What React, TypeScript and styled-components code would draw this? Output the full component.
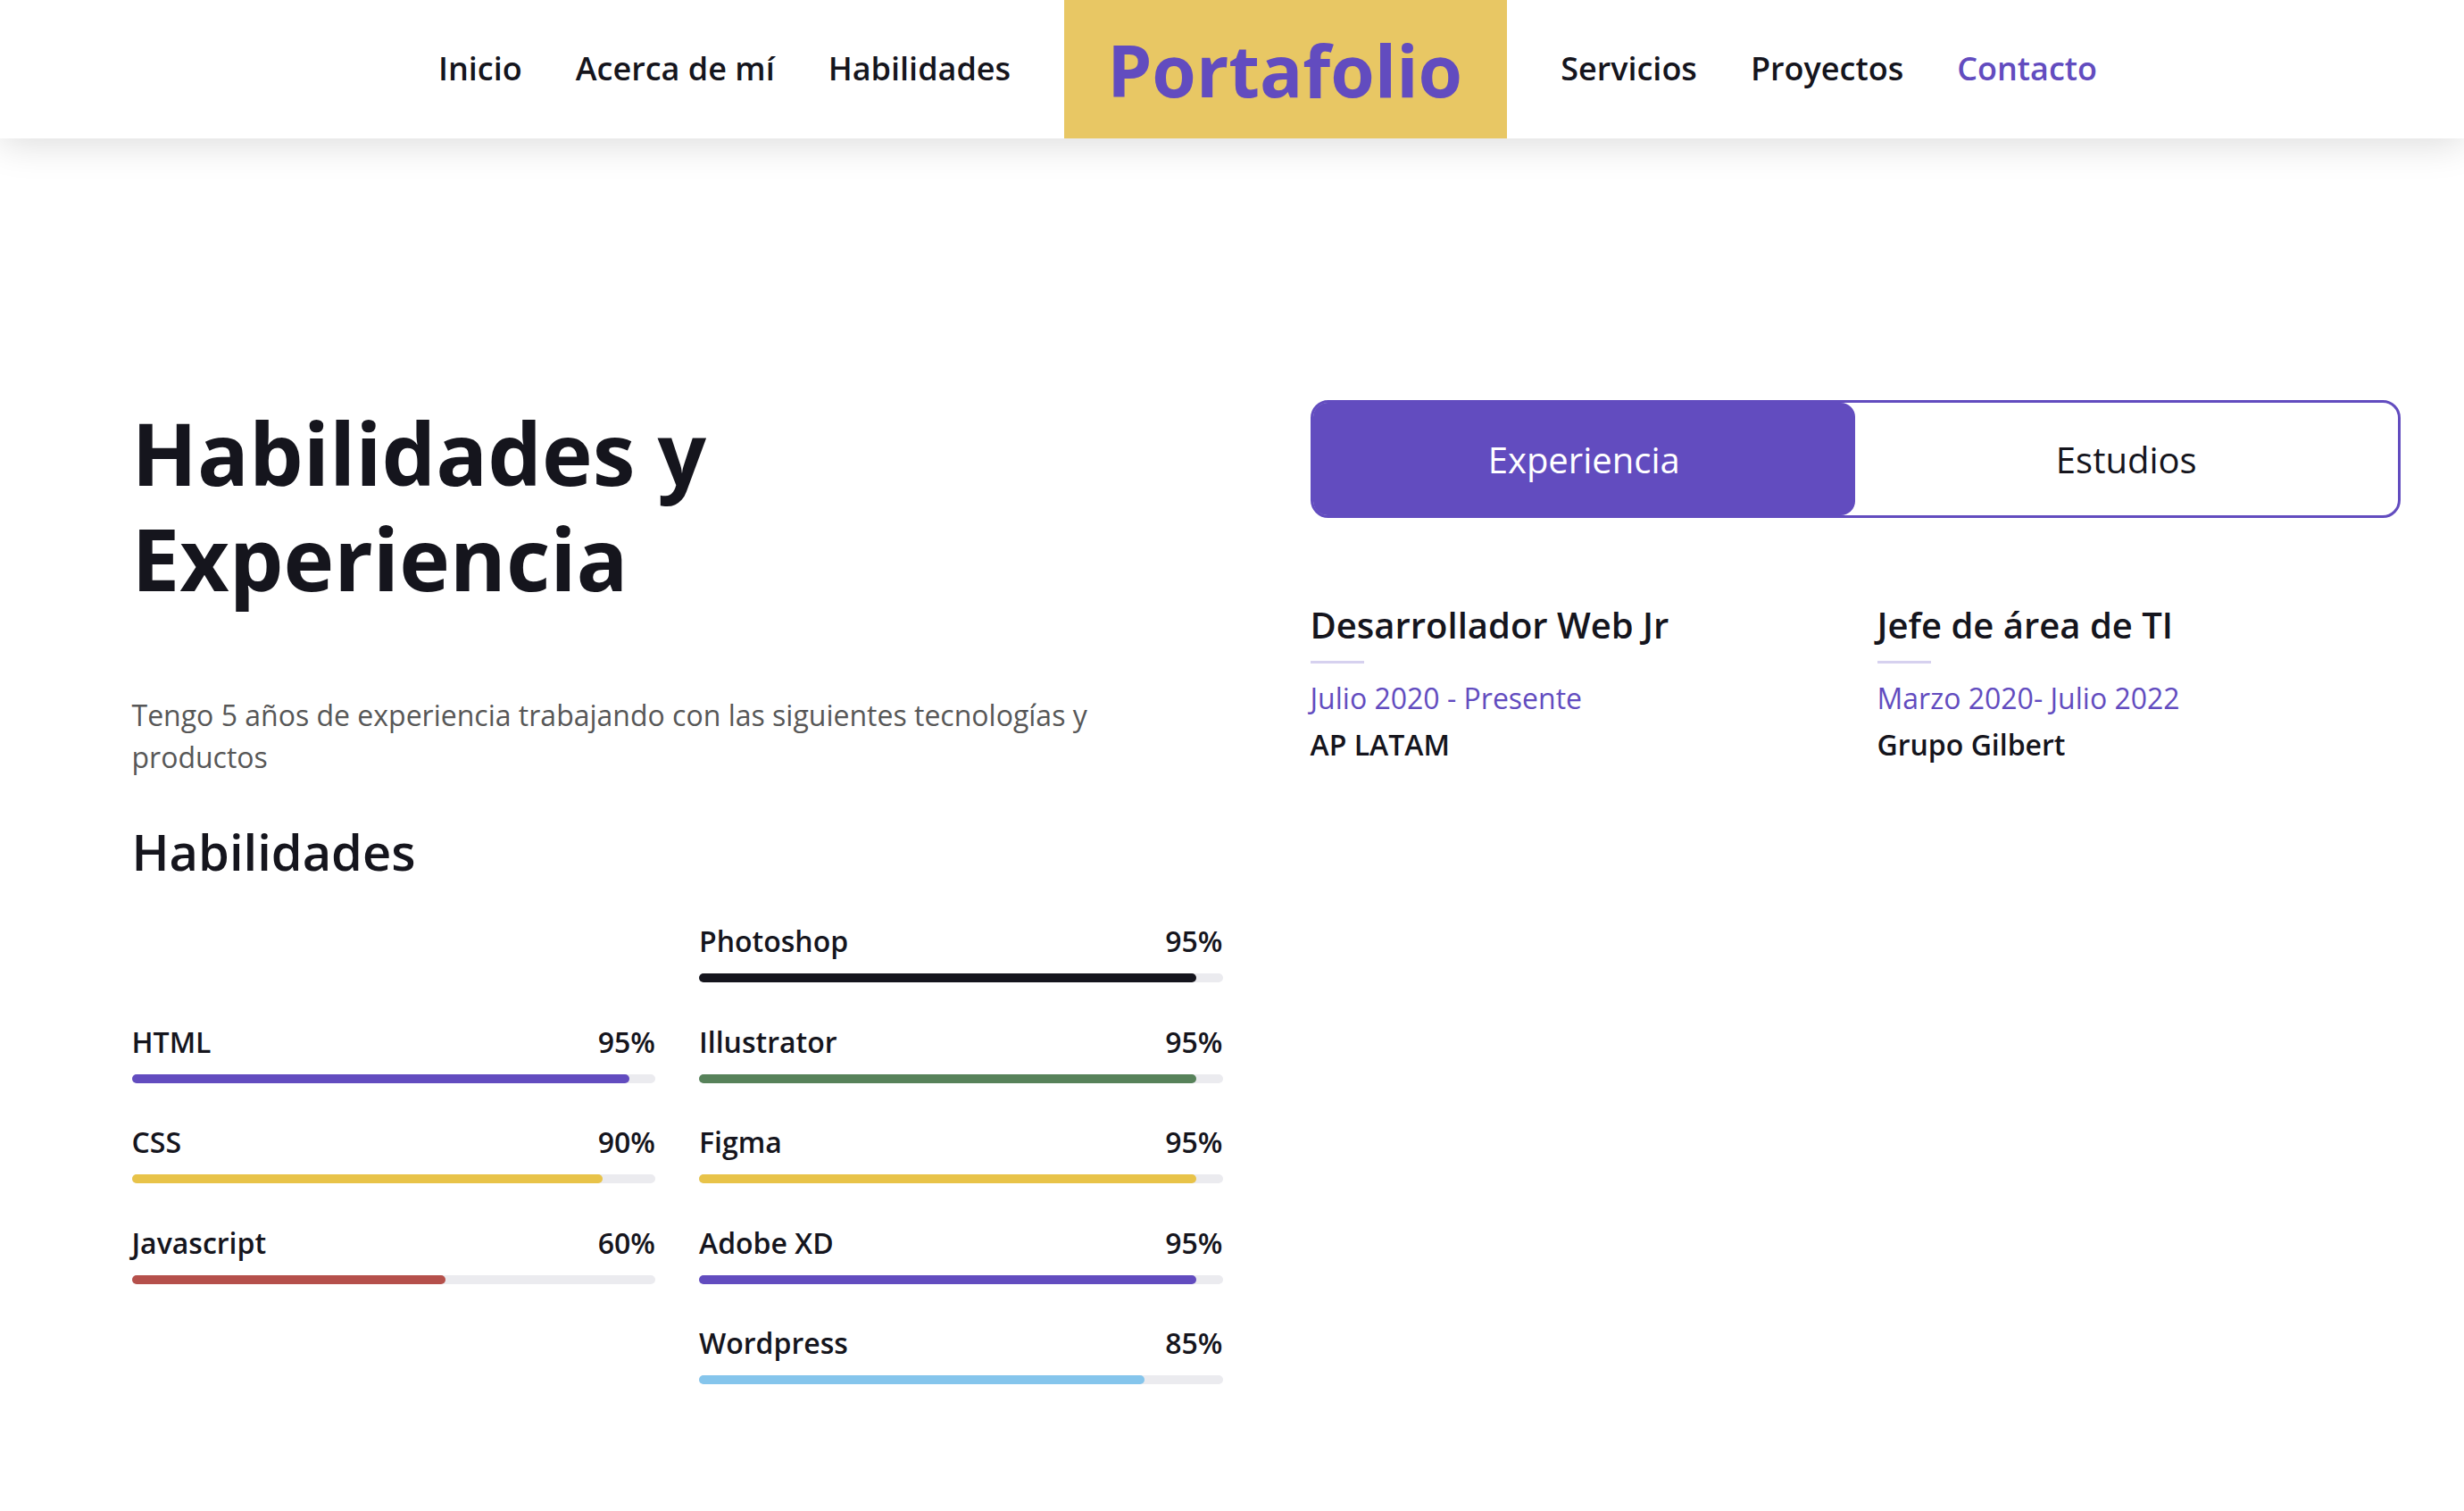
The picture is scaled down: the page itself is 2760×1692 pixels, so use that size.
import styled, { createGlobalStyle } from 'styled-components';

const purple = '#624cbf';
const ink = '#15151d';

const GlobalStyle = createGlobalStyle`
  * {
    box-sizing: border-box;
  }
  body {
    margin: 0;
    background: #fff;
    color: ${ink};
    font-family: 'Open Sans', 'Noto Sans', sans-serif;
  }
`;

const navItems = ['Inicio', 'Acerca de mí', 'Habilidades'];
const navItemsRight = ['Servicios', 'Proyectos', 'Contacto'];

const skillsLeft = [
  { name: 'HTML', value: 95, color: purple },
  { name: 'CSS', value: 90, color: '#e8c349' },
  { name: 'Javascript', value: 60, color: '#b5504b' },
];

const skillsRight = [
  { name: 'Photoshop', value: 95, color: ink },
  { name: 'Illustrator', value: 95, color: '#57825a' },
  { name: 'Figma', value: 95, color: '#e8c349' },
  { name: 'Adobe XD', value: 95, color: purple },
  { name: 'Wordpress', value: 85, color: '#85c5ec' },
];

const jobs = [
  { title: 'Desarrollador Web Jr', date: 'Julio 2020 - Presente', company: 'AP LATAM' },
  { title: 'Jefe de área de TI', date: 'Marzo 2020- Julio 2022', company: 'Grupo Gilbert' },
];

type Skill = { name: string; value: number; color: string };

function SkillBar({ skill }: { skill: Skill }) {
  return (
    <SkillItem>
      <SkillLabel>
        <span>{skill.name}</span>
        <span>{skill.value}%</span>
      </SkillLabel>
      <Track>
        <Fill $color={skill.color} style={{ width: `${skill.value}%` }} />
      </Track>
    </SkillItem>
  );
}

export default function App() {
  return (
    <>
      <GlobalStyle />
      <Header>
        <Nav>
          {navItems.map((item) => (
            <NavLink key={item} href="#">
              {item}
            </NavLink>
          ))}
          <Brand href="#">Portafolio</Brand>
          {navItemsRight.map((item) => (
            <NavLink key={item} href="#" $active={item === 'Contacto'}>
              {item}
            </NavLink>
          ))}
        </Nav>
      </Header>

      <Main>
        <Section>
          <div>
            <Title>
              Habilidades y
              <br />
              Experiencia
            </Title>
            <Intro>
              Tengo 5 años de experiencia trabajando con las siguientes tecnologías y productos
            </Intro>
            <SubTitle>Habilidades</SubTitle>
            <SkillsGrid>
              <SkillColumn>
                {skillsLeft.map((s) => (
                  <SkillBar key={s.name} skill={s} />
                ))}
              </SkillColumn>
              <SkillColumn>
                {skillsRight.map((s) => (
                  <SkillBar key={s.name} skill={s} />
                ))}
              </SkillColumn>
            </SkillsGrid>
          </div>

          <div>
            <Tabs>
              <TabButton $active>Experiencia</TabButton>
              <TabButton>Estudios</TabButton>
            </Tabs>
            <JobsGrid>
              {jobs.map((job) => (
                <Job key={job.title}>
                  <JobTitle>{job.title}</JobTitle>
                  <Divider />
                  <JobDate>{job.date}</JobDate>
                  <Company>{job.company}</Company>
                </Job>
              ))}
            </JobsGrid>
          </div>
        </Section>
      </Main>
    </>
  );
}

const Header = styled.header`
  position: relative;
  z-index: 1;
  height: 155px;
  background: #fff;
  box-shadow: 0 6px 40px rgba(0, 0, 0, 0.14);
`;
const Nav = styled.nav`
  display: flex;
  justify-content: center;
  align-items: center;
  gap: 60px;
  height: 100%;
  padding-left: 80px;
  padding-bottom: 2px;
`;
const NavLink = styled.a<{ $active?: boolean }>`
  font-size: 36px;
  font-weight: 600;
  color: ${({ $active }) => ($active ? purple : ink)};
  text-decoration: none;
`;
const Brand = styled.a`
  display: flex;
  align-items: center;
  align-self: stretch;
  margin-bottom: -2px;
  padding: 0 50px 0 48px;
  background: #e8c764;
  color: ${purple};
  font-size: 80px;
  font-weight: 700;
  text-decoration: none;
`;
const Main = styled.main`
  padding-left: 76px;
`;
const Section = styled.section`
  display: grid;
  grid-template-columns: 1222px 1221px;
  column-gap: 98px;
  width: 2541px;
  margin: 0 auto;
  padding: 293px 0 120px;
`;
const Title = styled.h1`
  margin: 0;
  font-size: 96px;
  line-height: 118px;
  font-weight: 700;
`;
const Intro = styled.p`
  max-width: 1100px;
  margin: 93px 0 0;
  font-size: 32px;
  line-height: 47px;
  color: #575757;
`;
const SubTitle = styled.h2`
  margin: 47px 0 0;
  font-size: 56px;
  line-height: 70px;
  font-weight: 600;
`;
const SkillsGrid = styled.div`
  display: grid;
  grid-template-columns: 1fr 1fr;
  column-gap: 49px;
  align-items: center;
  margin-top: 41px;
`;
const SkillColumn = styled.div`
  display: flex;
  flex-direction: column;
  gap: 41.5px;
`;
const SkillItem = styled.div`
  display: flex;
  flex-direction: column;
`;
const SkillLabel = styled.div`
  display: flex;
  justify-content: space-between;
  font-size: 32px;
  line-height: 50px;
  font-weight: 600;
`;
const Track = styled.div`
  height: 10px;
  margin-top: 11px;
  border-radius: 5px;
  background: #ebebef;
`;
const Fill = styled.div<{ $color: string }>`
  height: 100%;
  border-radius: 5px;
  background: ${({ $color }) => $color};
`;
const Tabs = styled.div`
  display: flex;
  height: 132px;
  border: 3px solid ${purple};
  border-radius: 20px;
`;
const TabButton = styled.button<{ $active?: boolean }>`
  flex: 1;
  border: none;
  border-radius: 16px;
  background: ${({ $active }) => ($active ? purple : 'transparent')};
  color: ${({ $active }) => ($active ? '#fff' : ink)};
  font-family: inherit;
  font-size: 40px;
  font-weight: 400;
  cursor: pointer;
`;
const JobsGrid = styled.div`
  display: grid;
  grid-template-columns: 1fr 1fr;
  column-gap: 49px;
  margin-top: 96px;
`;
const Job = styled.div`
  display: flex;
  flex-direction: column;
`;
const JobTitle = styled.h3`
  margin: 0;
  font-size: 40px;
  line-height: 48px;
  font-weight: 600;
`;
const Divider = styled.span`
  width: 60px;
  height: 3px;
  margin-top: 16px;
  background: #d6d1ef;
`;
const JobDate = styled.span`
  margin-top: 16px;
  font-size: 32px;
  line-height: 45px;
  color: ${purple};
`;
const Company = styled.span`
  margin-top: 7px;
  font-size: 32px;
  line-height: 45px;
  font-weight: 600;
`;
